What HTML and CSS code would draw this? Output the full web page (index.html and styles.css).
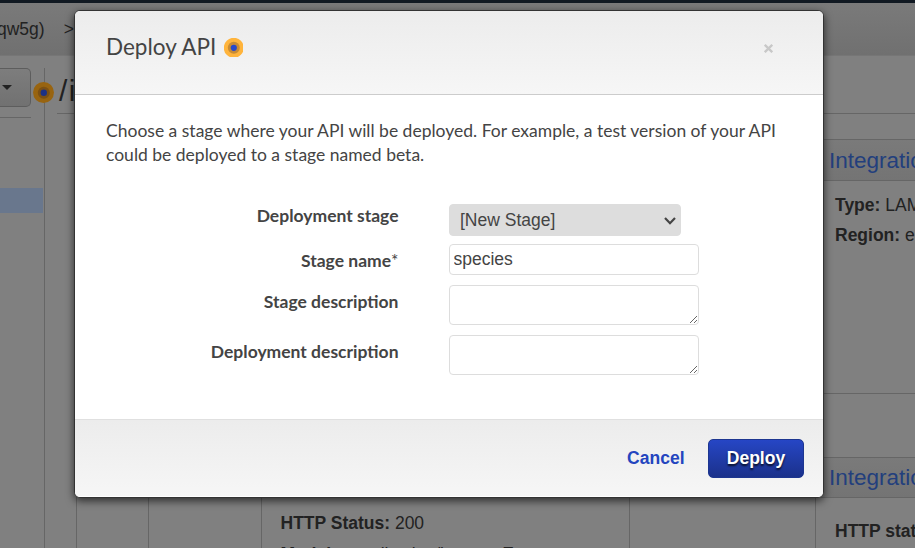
FILE: index.html
```html
<!DOCTYPE html>
<html lang="en">
<head>
<meta charset="utf-8">
<title>Deploy API</title>
<link rel="stylesheet" href="styles.css">
</head>
<body>
<div class="page">
  <div class="navbar"></div>
  <header class="breadcrumb"><span>qw5g)</span><span>&gt;</span></header>
  <div class="workspace">
    <aside class="sidebar">
      <div class="actions"><button class="actions-button" aria-label="Actions"><svg width="10" height="5" viewBox="0 0 10 5"><path d="M0 0H10L5 5Z" fill="#222"/></svg></button></div>
      <div class="resource"></div>
      <svg class="hint" width="21" height="21" viewBox="0 0 21 21"><circle cx="10.5" cy="10.5" r="10.5" fill="#986410"/><circle cx="10.8" cy="10.8" r="6" fill="#7b5014"/><circle cx="10.8" cy="10.8" r="3.2" fill="#1c3186"/></svg>
    </aside>
    <main class="content">
      <h1 class="path">/i</h1>
      <section class="row row-top">
        <div class="panel">
          <h2>Integration Request</h2>
          <p><b>Type:</b> LAMBDA</p>
          <p><b>Region:</b> eu-west-1</p>
        </div>
      </section>
      <section class="row row-bottom">
        <div class="client"></div>
        <div class="panel method">
          <h2>Method Response</h2>
          <p><b>HTTP Status:</b> 200</p>
          <p><b>Models:</b> application/json =&gt; Empty</p>
        </div>
        <div class="panel">
          <h2>Integration Response</h2>
          <p><b>HTTP status pattern:</b> -</p>
        </div>
      </section>
    </main>
  </div>
</div>
<div class="modal" role="dialog">
  <header class="modal-header">
    <h3>Deploy API</h3>
    <svg width="19" height="19" viewBox="0 0 19 19"><circle cx="9.8" cy="9.8" r="10" fill="#ffb43c"/><circle cx="9.8" cy="9.8" r="6" fill="#c88b35"/><circle cx="9.8" cy="9.8" r="3.1" fill="#2848ca"/></svg>
    <button class="close" aria-label="Close"><svg width="9" height="9" viewBox="0 0 9 9"><path d="M.8.8L8.2 8.2M8.2.8L.8 8.2" stroke="#c8c8c8" stroke-width="2.3"/></svg></button>
  </header>
  <div class="modal-body">
    <p>Choose a stage where your API will be deployed. For example, a test version of your API could be deployed to a stage named beta.</p>
    <form class="fields">
      <label class="stage-label" for="stage">Deployment stage</label>
      <div class="select">
        <select id="stage"><option>[New Stage]</option></select>
        <svg width="12" height="8" viewBox="0 0 12 8"><path d="M1 1L6 6.2L11 1" fill="none" stroke="#444" stroke-width="2.2"/></svg>
      </div>
      <label class="name-label" for="name">Stage name<span>*</span></label>
      <input id="name" value="species">
      <label for="sdesc">Stage description</label>
      <textarea id="sdesc"></textarea>
      <label for="ddesc">Deployment description</label>
      <textarea id="ddesc"></textarea>
    </form>
  </div>
  <footer class="modal-footer">
    <a class="cancel">Cancel</a>
    <button class="deploy">Deploy</button>
  </footer>
</div>
</body>
</html>
```
FILE: styles.css
```css
* { box-sizing: border-box; }
body {
  margin: 0;
  font: 17.5px "Liberation Sans", Arial, sans-serif;
  color: #444;
}
h1, h2, h3, p { margin: 0; font-weight: normal; }
button { font: inherit; padding: 0; border: 0; background: none; }
svg { display: block; }

.page {
  height: 548px;
  overflow: hidden;
  display: flex;
  flex-direction: column;
  background: #808080;
  color: #222;
}
.navbar { height: 3px; flex: none; background: #111922; }
.breadcrumb {
  height: 53px;
  flex: none;
  display: flex;
  gap: 19px;
  margin-left: -3px;
  line-height: 52px;
  background: linear-gradient(#7a7a7a, #707070);
  border-bottom: 1px solid #767676;
}
.workspace { flex: 1; min-height: 0; display: flex; padding-top: 12px; }
.sidebar {
  position: relative;
  width: 45px;
  flex: none;
  border-right: 1px solid #666;
}
.actions { width: 31px; height: 50px; border-bottom: 1px solid #666; }
.actions-button {
  width: 31px;
  height: 39px;
  padding-left: 2px;
  border: 1px solid #5d5d5d;
  border-left: 0;
  border-radius: 0 5px 5px 0;
  background: linear-gradient(#7d7d7d, #717171);
}
.resource { width: 43px; height: 25px; margin-top: 70px; background: #69778d; }
.hint { position: absolute; left: 33px; top: 14px; }

.content { flex: 1; min-width: 0; padding-left: 12px; }
.path {
  height: 46px;
  padding-left: 2px;
  font-size: 30px;
  line-height: 46px;
  letter-spacing: 1.5px;
  border-bottom: 1px solid #666;
}
.row { display: flex; padding-left: 19px; }
.row-top { height: 255px; margin-top: 25px; justify-content: flex-end; }
.row-bottom { height: 120px; margin-top: 63px; }
.panel { width: 100px; flex: none; border: 1px solid #666; border-right: 0; white-space: nowrap; overflow: hidden; }
.panel h2 {
  height: 41px;
  padding-left: 13px;
  font-size: 22.5px;
  line-height: 41px;
  color: #233f7d;
  background: linear-gradient(#7a7a7a, #747474);
  border-bottom: 1px solid #666;
}
.panel p { padding-left: 19px; line-height: 30px; }
.panel h2 + p { margin-top: 9px; }
.row-bottom .panel h2 { height: 40px; line-height: 39px; }
.row-bottom .panel h2 + p { margin-top: 18px; }
.row-bottom .method h2 + p { margin-top: 10px; }
.client { width: 73px; flex: none; border: 1px solid #666; }
.method { width: 369px; margin: 0 185px 0 112px; border-right: 1px solid #666; }
.panel.method p { padding-left: 18.5px; }
.method p + p { margin-top: 1px; }

.modal {
  position: absolute;
  left: 74px;
  top: 10px;
  width: 750px;
  height: 488px;
  display: flex;
  flex-direction: column;
  border: 1px solid #333;
  border-radius: 6px;
  overflow: hidden;
  background: #fff;
  box-shadow: 0 3px 9px rgba(0, 0, 0, .65);
  font-family: Lato, sans-serif;
}
.modal-header {
  height: 84px;
  flex: none;
  display: flex;
  padding: 27px 50px 0 31px;
  background: linear-gradient(#ececec, #f6f6f6);
  border-bottom: 1px solid #ccc;
}
.modal-header h3 { width: 118px; font-size: 22.5px; line-height: 18px; white-space: nowrap; }
.close { width: 9px; height: 9px; margin: 6px 0 0 auto; }
.modal-body { flex: 1; padding: 24px 30px 0 31px; }
.modal-body p { line-height: 24px; }
.fields {
  display: grid;
  grid-template-columns: 292.5px 250px;
  grid-template-rows: 30px 31px 40px 40px;
  row-gap: 10px;
  column-gap: 50.5px;
  margin-top: 37px;
}
.fields label { text-align: right; font-weight: bold; line-height: 24px; padding-top: 5px; }
.fields label span { font-weight: normal; }
.fields .stage-label { padding-top: 0; }
.fields input, .fields select, .fields textarea {
  width: 250px;
  margin: 0;
  font: 17.5px "Liberation Sans", Arial, sans-serif;
  color: #444;
  background: #fff;
  border: 1px solid #ddd;
  border-radius: 4px;
  padding: 0 3.5px;
}
.select { position: relative; width: 232px; height: 32px; }
.fields .select select { width: 232px; height: 32px; appearance: none; background: #ddd; padding: 0 0 0 10px; }
.select svg { position: absolute; right: 5px; top: 13px; pointer-events: none; }
.fields input { height: 31px; }
.fields textarea { height: 40px; resize: both; }
.modal-footer {
  height: 78px;
  flex: none;
  display: flex;
  align-items: flex-start;
  justify-content: flex-end;
  gap: 23.5px;
  padding: 19px 19px 0;
  font: bold 17.5px "Liberation Sans", Arial, sans-serif;
  background: linear-gradient(#ececec, #f6f6f6);
  border-top: 1px solid #e0e0e0;
  border-bottom: 1px solid #fff;
}
.cancel { line-height: 38px; color: #2445bf; }
.deploy {
  width: 96px;
  height: 39px;
  color: #fff;
  border: 1px solid #1d3690;
  border-radius: 5px;
  background: linear-gradient(#2646c5, #1b318b);
  text-shadow: 0 2px 2px rgba(0, 0, 0, .75);
}
```
